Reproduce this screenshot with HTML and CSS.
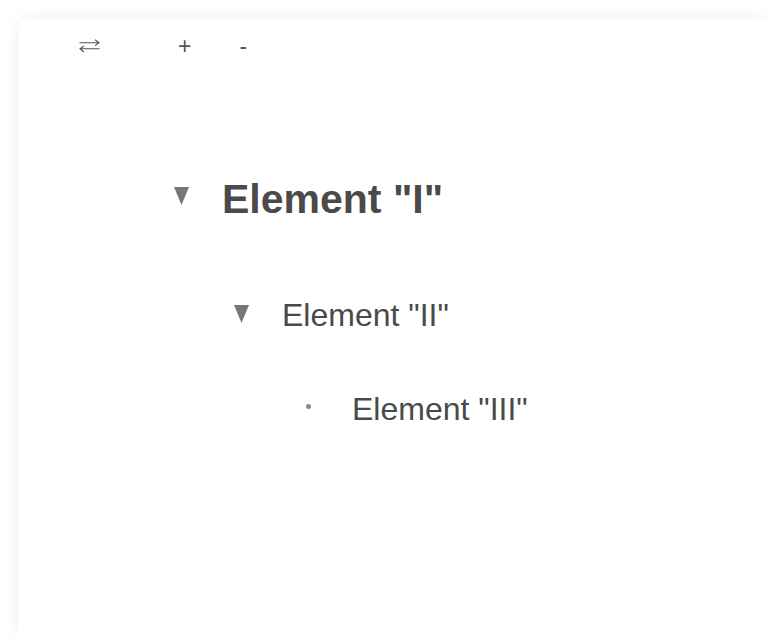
FILE: index.html
```html
<!DOCTYPE html>
<html>
<head>
<meta charset="utf-8">
<link rel="stylesheet" href="styles.css">
</head>
<body>
<div class="card">
  <div class="toolbar">
    <span class="tool tool-swap"><svg width="21" height="14" viewBox="0 0 21 14"><g fill="none" stroke="#555" stroke-width="1.1"><path d="M0.5 3.8H20M16 0.8L20 3.8L16 6.6"/><path d="M20.5 9.8H1M5 7L1 9.8L5 13"/></g></svg></span>
    <span class="tool tool-plus">+</span>
    <span class="tool tool-minus">-</span>
  </div>
  <ul class="tree level1">
    <li>
      <div class="node node1"><svg class="caret" width="15" height="18" viewBox="0 0 15 18"><path d="M0 0H15L7.5 18Z" fill="#777"/></svg><span class="label">Element "I"</span></div>
      <ul class="tree level2">
        <li>
          <div class="node node2"><svg class="caret" width="15" height="18" viewBox="0 0 15 18"><path d="M0 0H15L7.5 18Z" fill="#777"/></svg><span class="label">Element "II"</span></div>
          <ul class="tree level3">
            <li><div class="node node3"><span class="dot"></span><span class="label">Element "III"</span></div></li>
          </ul>
        </li>
      </ul>
    </li>
  </ul>
</div>
</body>
</html>
```
FILE: styles.css
```css
html, body {
  margin: 0;
  padding: 0;
  background: #ffffff;
  font-family: "Liberation Sans", Arial, sans-serif;
  color: #4a4a4a;
  overflow: hidden;
}
.card {
  margin: 19px 0 0 19px;
  height: 617px;
  background: #fff;
  border-radius: 9px 0 0 0;
  box-shadow: 0 0 18px rgba(0, 0, 0, 0.07);
}
.toolbar {
  display: flex;
  align-items: center;
  height: 54px;
  padding-left: 60px;
}
.tool {
  color: #555;
  line-height: 1;
  display: flex;
}
.tool-swap {
  width: 21px;
}
.tool-plus {
  font-size: 23px;
  margin-left: 78px;
}
.tool-minus {
  font-size: 23px;
  margin-left: 48px;
  margin-top: 1px;
}
.tree {
  list-style: none;
  margin: 0;
  padding: 0;
}
.level1 {
  padding-left: 155px;
  margin-top: 104px;
}
.level2 {
  padding-left: 60px;
  margin-top: 76px;
}
.level3 {
  padding-left: 72px;
  margin-top: 58px;
}
.node {
  display: flex;
  align-items: center;
}
.caret {
  flex: none;
}
.node1 .caret {
  margin-right: 33px;
  margin-bottom: 6px;
}
.node2 .caret {
  margin-right: 33px;
  margin-bottom: 3px;
}
.node1 .label {
  font-size: 41px;
  font-weight: bold;
  line-height: 44px;
}
.node2 .label,
.node3 .label {
  font-size: 32px;
  line-height: 36px;
}
.dot {
  flex: none;
  width: 5px;
  height: 5px;
  border-radius: 50%;
  background: #888;
  margin-right: 41px;
  margin-bottom: 5px;
}
```
